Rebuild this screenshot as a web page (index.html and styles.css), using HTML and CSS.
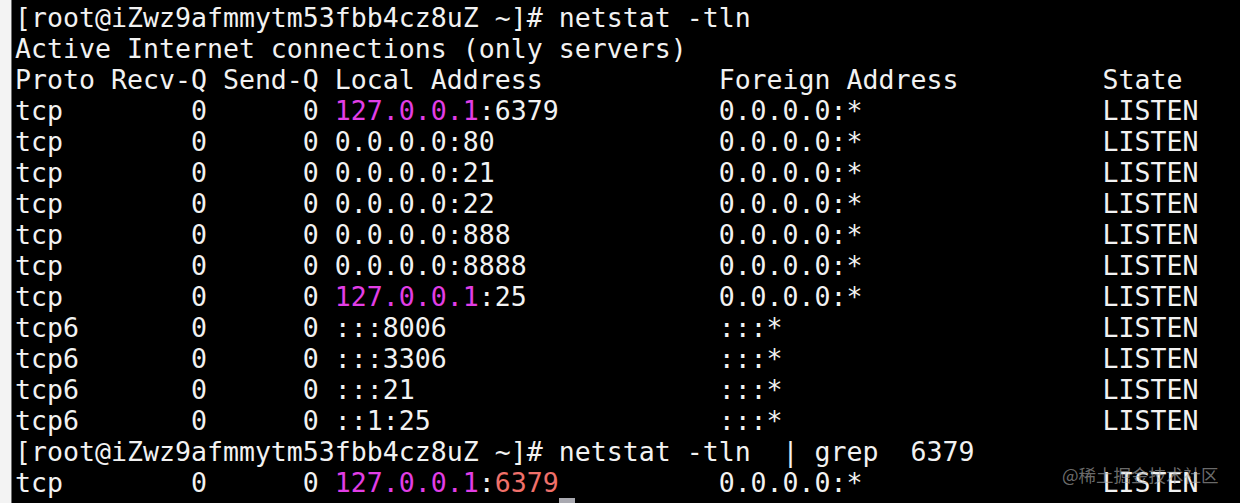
FILE: index.html
```html
<!DOCTYPE html>
<html lang="en">
<head>
<meta charset="utf-8">
<title>netstat</title>
<link rel="stylesheet" href="styles.css">
</head>
<body>
<div class="terminal">
<pre class="screen">[root@iZwz9afmmytm53fbb4cz8uZ ~]# netstat -tln
Active Internet connections (only servers)
Proto Recv-Q Send-Q <span class="col">Local Address</span><span class="col">Foreign Address</span>State
tcp        0      0 <span class="col"><span class="mag">127.0.0.1</span>:6379</span><span class="col">0.0.0.0:*</span>LISTEN
tcp        0      0 <span class="col">0.0.0.0:80</span><span class="col">0.0.0.0:*</span>LISTEN
tcp        0      0 <span class="col">0.0.0.0:21</span><span class="col">0.0.0.0:*</span>LISTEN
tcp        0      0 <span class="col">0.0.0.0:22</span><span class="col">0.0.0.0:*</span>LISTEN
tcp        0      0 <span class="col">0.0.0.0:888</span><span class="col">0.0.0.0:*</span>LISTEN
tcp        0      0 <span class="col">0.0.0.0:8888</span><span class="col">0.0.0.0:*</span>LISTEN
tcp        0      0 <span class="col"><span class="mag">127.0.0.1</span>:25</span><span class="col">0.0.0.0:*</span>LISTEN
tcp6       0      0 <span class="col">:::8006</span><span class="col">:::*</span>LISTEN
tcp6       0      0 <span class="col">:::3306</span><span class="col">:::*</span>LISTEN
tcp6       0      0 <span class="col">:::21</span><span class="col">:::*</span>LISTEN
tcp6       0      0 <span class="col">::1:25</span><span class="col">:::*</span>LISTEN
[root@iZwz9afmmytm53fbb4cz8uZ ~]# netstat -tln  | grep  6379
tcp        0      0 <span class="col"><span class="mag">127.0.0.1</span>:<span class="hit">6379</span></span><span class="col">0.0.0.0:*</span>LISTEN
[root@iZwz9afmmytm53fbb4cz8uZ ~]# <span class="cursor"> </span></pre>
<div class="watermark">@稀土掘金技术社区</div>
</div>
</body>
</html>
```

FILE: styles.css
```css
html, body {
  margin: 0;
  padding: 0;
  height: 100%;
  background: #f3f3f3;
  overflow: hidden;
}

.terminal {
  position: relative;
  margin-left: 11px;
  height: 503px;
  background: #000;
  border-left: 1px solid #6e6e6e;
  overflow: hidden;
}

.screen {
  margin: 0;
  padding: 2px 0 0 3px;
  font-family: "DejaVu Sans Mono", monospace;
  font-size: 26.57px;
  line-height: 31px;
  color: #f2f2f2;
  white-space: pre;
}

.col {
  display: inline-block;
  width: 24ch;
  vertical-align: baseline;
}

.mag {
  color: #e23ee6;
}

.hit {
  color: #f0706a;
}

.cursor {
  display: inline-block;
  width: 1ch;
  background: #a9a9b0;
}

.watermark {
  position: absolute;
  left: 1050px;
  top: 463px;
  font-family: "Noto Sans CJK SC", "Noto Sans", sans-serif;
  font-size: 17.5px;
  line-height: 24px;
  color: rgba(170, 170, 170, 0.65);
}
```
